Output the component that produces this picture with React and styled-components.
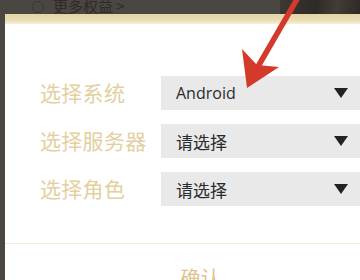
import styled, { createGlobalStyle } from 'styled-components'

const Global = createGlobalStyle`
	html, body {
		margin: 0;
		padding: 0;
		background: #4a4641;
		overflow: hidden;
	}
`

const Page = styled.div`
	position: relative;
	width: 360px;
	height: 280px;
	overflow: hidden;
	background: #4a4641;
	font-family: "Noto Sans CJK SC", "Noto Sans", sans-serif;
`

const TopBar = styled.div`
	display: flex;
	height: 14px;
	overflow: hidden;
`

const TopLeft = styled.div`
	flex: 1;
	display: flex;
	align-items: flex-end;
	gap: 9px;
	padding-left: 32px;
`

const Badge = styled.span`
	width: 12px;
	height: 12px;
	margin-bottom: 1px;
	border-radius: 50%;
	border: 1px solid #3a3632;
	box-sizing: border-box;
`

const TopText = styled.span`
	font-size: 15px;
	line-height: 16px;
	color: #2f2b27;
`

const Photo = styled.div`
	width: 80px;
	background: linear-gradient(100deg, #3d3832 0%, #2e2a26 45%, #433d36 70%, #2d2925 100%);
`

const Modal = styled.div`
	margin-left: 5px;
	min-height: 266px;
	background: #fff;
	border-radius: 6px 0 0 0;
	display: flex;
	flex-direction: column;
	& > * {
		flex-shrink: 0;
	}
`

const Band = styled.div`
	height: 10px;
	background: linear-gradient(180deg, #e4d4a6 0%, #eadcb4 60%, #f6efd8 100%);
`

const Form = styled.div`
	display: flex;
	flex-direction: column;
	gap: 14px;
	padding: 52px 0 0 35px;
`

const Row = styled.div`
	display: flex;
	align-items: center;
	height: 34px;
`

const Label = styled.div`
	width: 121px;
	margin-top: -3px;
	font-size: 21px;
	line-height: 28px;
	color: #e3cfa0;
	white-space: nowrap;
	letter-spacing: 0.3px;
`

const Select = styled.div`
	flex: 1;
	height: 34px;
	display: flex;
	align-items: center;
	justify-content: space-between;
	padding: 0 12px 0 15px;
	background: #e9e9e9;
	color: #2b2b2b;
	font-size: ${p => (p.$latin ? '16px' : '17px')};
	font-family: ${p => (p.$latin ? '"Open Sans", "Noto Sans", sans-serif' : '"Noto Sans CJK SC", sans-serif')};
`

const Caret = styled.span`
	width: 0;
	height: 0;
	border-left: 7px solid transparent;
	border-right: 7px solid transparent;
	border-top: 10px solid #222;
`

const Divider = styled.div`
	margin-top: 37px;
	height: 1px;
	background: #f3ecda;
`

const Footer = styled.div`
	display: flex;
	justify-content: center;
	padding: 22px 0 0 36px;
	font-size: 20px;
	line-height: 24px;
	color: #dcc38e;
`

const Arrow = styled.svg`
	position: absolute;
	left: 0;
	top: 0;
	pointer-events: none;
`

const rows = [
	{ label: '选择系统', value: 'Android', latin: true },
	{ label: '选择服务器', value: '请选择' },
	{ label: '选择角色', value: '请选择' },
]

const App = () => (
	<>
		<Global />
		<Page>
			<TopBar>
				<TopLeft>
					<Badge />
					<TopText>更多权益 &gt;</TopText>
				</TopLeft>
				<Photo />
			</TopBar>
			<Modal>
				<Band />
				<Form>
					{rows.map(r => (
						<Row key={r.label}>
							<Label>{r.label}</Label>
							<Select $latin={r.latin}>
								<span>{r.value}</span>
								<Caret />
							</Select>
						</Row>
					))}
				</Form>
				<Divider />
				<Footer>确认</Footer>
			</Modal>
			{/* red pointer arrow */}
			<Arrow width="360" height="280" viewBox="0 0 360 280">
				<line x1="300" y1="-6" x2="256" y2="70" stroke="#d33a2c" strokeWidth="5.5" />
				<polygon points="247,88 242,49 257,65 279,67" fill="#d33a2c" />
			</Arrow>
		</Page>
	</>
)

export default App
